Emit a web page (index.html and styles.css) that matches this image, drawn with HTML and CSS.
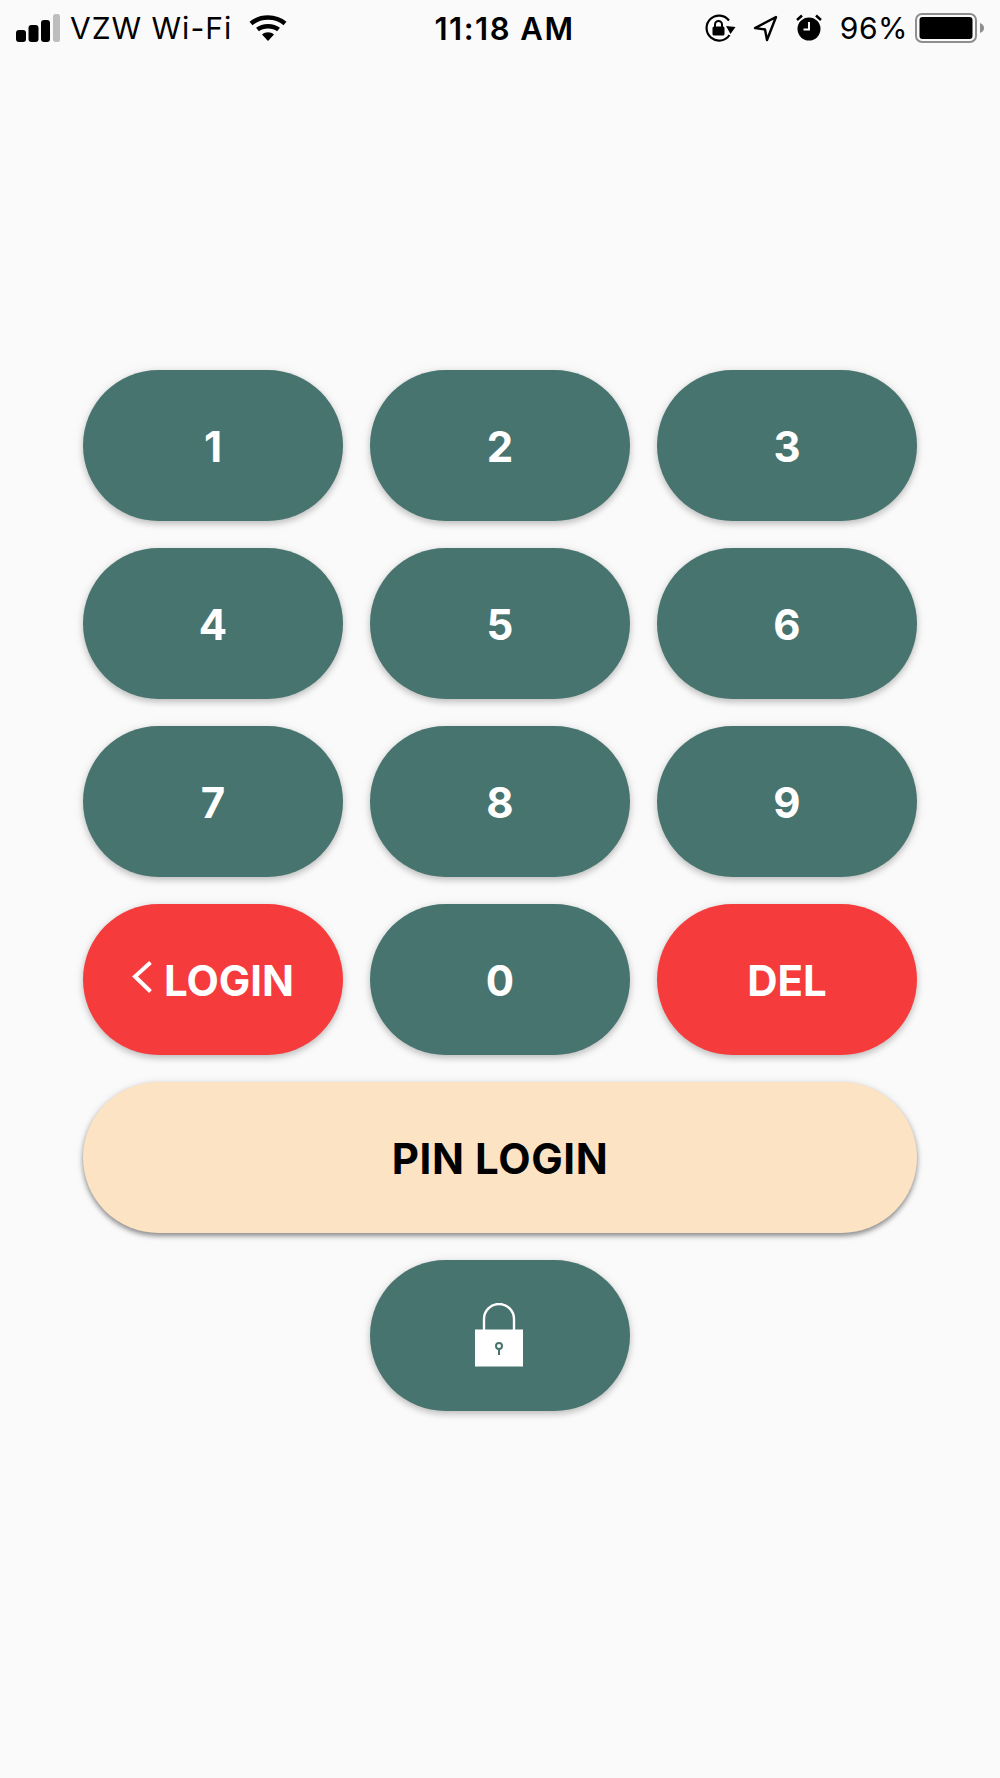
FILE: index.html
```html
<!DOCTYPE html>
<html lang="en">
<head>
<meta charset="utf-8">
<title>PIN Login</title>
<link rel="stylesheet" href="styles.css">
</head>
<body>
<div class="status">
  <div class="status-left">
    <svg class="signal" width="44" height="28" viewBox="0 0 44 28">
      <rect x="0" y="16" width="10" height="12" rx="3" fill="#000"/>
      <rect x="12.5" y="11" width="10" height="17" rx="3" fill="#000"/>
      <rect x="25" y="6" width="9" height="22" rx="3" fill="#000"/>
      <rect x="37" y="0" width="7" height="28" rx="2.5" fill="#bdbdbd"/>
    </svg>
    <span class="carrier">VZW Wi-Fi</span>
    <svg class="wifi" width="38" height="28" viewBox="0 0 38 28">
      <path d="M2 9.5 C11.500 1.500 26.500 1.500 36 9.500" fill="none" stroke="#000" stroke-width="4.500"/>
      <path d="M8.500 15.500 C14 11 24 11 29.500 15.500" fill="none" stroke="#000" stroke-width="4.500"/>
      <path d="M13 20.500 C16.500 17.500 21.500 17.500 25 20.500 L19 27 Z" fill="#000"/>
    </svg>
  </div>
  <div class="status-time">11:18 AM</div>
  <div class="status-right">
    <svg width="31" height="28" viewBox="0 0 31 28">
      <path d="M24 6.500 A12.500 12.500 0 1 0 24.500 21" fill="none" stroke="#000" stroke-width="2.200"/>
      <path d="M21 12 L30.500 13 L25.500 20 Z" fill="#000"/>
      <rect x="7.500" y="12.500" width="12" height="9" rx="1.500" fill="#000"/>
      <path d="M10 13 V10.500 A3.500 3.500 0 0 1 17 10.500 V13" fill="none" stroke="#000" stroke-width="2"/>
    </svg>
    <svg class="arrow" width="25" height="28" viewBox="0 0 25 28">
      <path d="M23 3 L2 14 L12 15.500 L14 26 Z" fill="none" stroke="#000" stroke-width="2.400" stroke-linejoin="round"/>
    </svg>
    <svg class="alarm" width="26" height="28" viewBox="0 0 26 28">
      <circle cx="13" cy="15" r="11.500" fill="#000"/>
      <path d="M1 6 L6 1.500 M25 6 L20 1.500" stroke="#000" stroke-width="2.500"/>
      <path d="M13 8 V15.500 H7.500" fill="none" stroke="#fafafa" stroke-width="2"/>
    </svg>
    <span class="percent">96%</span>
    <svg class="battery" width="70" height="32" viewBox="0 0 70 32">
      <rect x="1" y="2" width="60" height="28" rx="6" fill="none" stroke="#8e8e8e" stroke-width="2"/>
      <rect x="4.500" y="5" width="53" height="22" rx="3" fill="#000"/>
      <path d="M65 11 C68 12 69 14 69 16 C69 18 68 20 65 21 Z" fill="#8e8e8e"/>
    </svg>
  </div>
</div>

<main class="pad">
  <div class="pill teal">1</div>
  <div class="pill teal">2</div>
  <div class="pill teal">3</div>
  <div class="pill teal">4</div>
  <div class="pill teal">5</div>
  <div class="pill teal">6</div>
  <div class="pill teal">7</div>
  <div class="pill teal">8</div>
  <div class="pill teal">9</div>
  <div class="pill red login">
    <svg class="chevron" width="20" height="32" viewBox="0 0 20 32">
      <path d="M18.500 1.500 L3 15.500 L18.500 30.500" fill="none" stroke="#fff" stroke-width="4"/>
    </svg>
    <span>LOGIN</span>
  </div>
  <div class="pill teal">0</div>
  <div class="pill red">DEL</div>
  <div class="pill cream wide">PIN LOGIN</div>
  <div class="pill teal lock">
    <svg class="lock-icon" width="48" height="66" viewBox="0 0 48 66">
      <path d="M9 27 V16 A15 15 0 0 1 39 16 V27" fill="none" stroke="#fff" stroke-width="2.400"/>
      <rect x="0" y="26.500" width="48" height="37" fill="#fff"/>
      <circle cx="24" cy="43" r="3" fill="none" stroke="#47746e" stroke-width="2"/>
      <path d="M24 46 V52" stroke="#47746e" stroke-width="2"/>
    </svg>
  </div>
</main>
</body>
</html>
```
FILE: styles.css
```css
html, body {
  margin: 0;
  padding: 0;
  background: #fafafa;
}
body {
  width: 1000px;
  height: 1778px;
  overflow: hidden;
  font-family: Inter, "Liberation Sans", sans-serif;
}
.status {
  height: 56px;
  display: grid;
  grid-template-columns: 1fr auto 1fr;
  align-items: center;
  color: #000;
  font-size: 30px;
  padding: 0 15px 0 16px;
}
.status svg {
  display: block;
  flex: none;
}
.status-left, .status-right {
  display: flex;
  align-items: center;
}
.status-left {
  justify-content: flex-start;
}
.status-right {
  justify-content: flex-end;
}
.carrier {
  margin-left: 10px;
  letter-spacing: 1px;
  font-weight: 400;
}
.wifi {
  margin-left: 17px;
}
.status-time {
  font-weight: 600;
  font-size: 31px;
  letter-spacing: 1.5px;
  margin-left: 8px;
}
.arrow {
  margin-left: 17px;
}
.alarm {
  margin-left: 18px;
}
.percent {
  margin-left: 18px;
  letter-spacing: 0.5px;
}
.battery {
  margin-left: 7px;
}
.pad {
  display: grid;
  grid-template-columns: repeat(3, 260px);
  grid-auto-rows: 151px;
  gap: 27px;
  justify-content: center;
  padding-top: 314px;
}
.pill {
  display: flex;
  align-items: center;
  justify-content: center;
  border-radius: 75.5px;
  padding-top: 2px;
  box-sizing: border-box;
  font-size: 42px;
  font-weight: 700;
  color: #fff;
  box-shadow: 0 3px 6px rgba(0, 0, 0, 0.2), 0 1px 12px rgba(0, 0, 0, 0.08);
}
.teal {
  background: #47746e;
}
.red {
  background: #f63b3d;
}
.cream {
  background: #fbe3c4;
  color: #000;
}
.wide {
  grid-column: 1 / -1;
  letter-spacing: 0.6px;
  box-shadow: 0 3px 5px rgba(0, 0, 0, 0.4), 0 1px 10px rgba(0, 0, 0, 0.1);
}
.lock {
  grid-column: 2;
  padding-top: 0;
}
.lock-icon {
  margin-right: 3px;
}
.login {
  gap: 12px;
}
.chevron {
  display: block;
  margin-top: -7px;
}
```
